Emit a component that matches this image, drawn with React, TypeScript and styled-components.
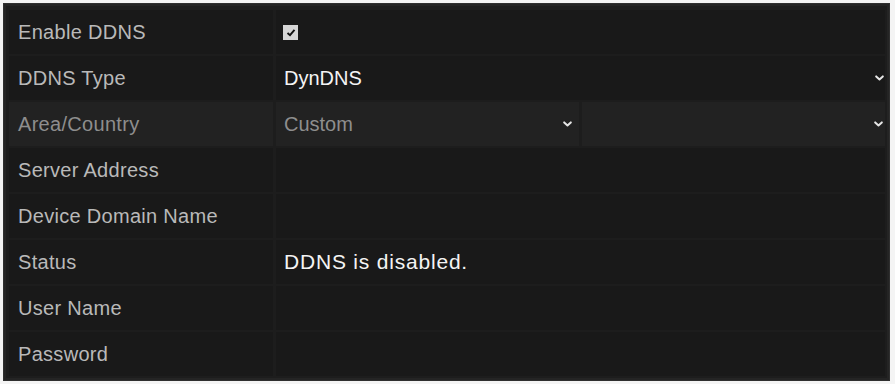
import React from "react";
import styled, { createGlobalStyle } from "styled-components";

const Global = createGlobalStyle`
  html, body { margin: 0; padding: 0; background: #f4f4f4; }
  body { font-family: "Liberation Sans", Arial, sans-serif; }
`;

const Frame = styled.div`
  width: 895px;
  height: 384px;
  box-sizing: border-box;
  padding: 3px 5px 3px 3px;
  background: #f4f4f4;
`;

const Panel = styled.div`
  height: 100%;
  box-sizing: border-box;
  background: #1d1d1d;
  border: 1px solid #2f2f2f;
  box-shadow: inset 0 0 0 2px #242424;
  padding: 6px 4px 4px 5px;
  display: flex;
  flex-direction: column;
  gap: 2px;
`;

const Row = styled.div`
  display: grid;
  grid-template-columns: 264px 1fr;
  gap: 3px;
  height: 44px;
  flex: 0 0 44px;
`;

const Cell = styled.div<{ $dim?: boolean; $value?: boolean; $big?: boolean }>`
  background: ${(p) => (p.$dim ? "#222222" : "#191919")};
  display: flex;
  align-items: center;
  padding-left: ${(p) => (p.$value ? "8px" : "9px")};
  font-size: ${(p) => (p.$big ? "21px" : "20px")};
  letter-spacing: ${(p) => (p.$big ? "0.8px" : p.$value ? "0" : "0.3px")};
  color: ${(p) => (p.$dim ? "#8e8e8e" : p.$value ? "#f4f4f4" : "#b9b9b9")};
  box-sizing: border-box;
  min-width: 0;
`;

const Split = styled.div`
  display: grid;
  grid-template-columns: 303px 1fr;
  gap: 3px;
`;

const Select = styled(Cell)<{ $edge?: number }>`
  justify-content: space-between;
  padding-right: ${(p) => p.$edge ?? 3}px;
`;

const Chevron = () => (
  <svg width="9" height="6" viewBox="0 0 9 6">
    <path d="M1.2 1.4 L4.5 4.4 L7.8 1.4" stroke="#e6e6e6" strokeWidth="2" fill="none" strokeLinecap="round" strokeLinejoin="round" />
  </svg>
);

const Check = styled.span`
  width: 15px;
  height: 15px;
  background: #d6d6d6;
  display: inline-flex;
  align-items: center;
  justify-content: center;
  margin-left: -1px;
`;

const labels = ["Server Address", "Device Domain Name"];

export default function App() {
  return (
    <>
      <Global />
      <Frame>
        <Panel>
          <Row>
            <Cell>Enable DDNS</Cell>
            <Cell $value>
              <Check>
                <svg width="10" height="9" viewBox="0 0 10 9">
                  <path d="M1.5 5 L4 7.2 L8.5 1.8" stroke="#111" strokeWidth="1.9" fill="none" />
                </svg>
              </Check>
            </Cell>
          </Row>
          <Row>
            <Cell>DDNS Type</Cell>
            <Select $value $edge={1}>
              <span>DynDNS</span>
              <Chevron />
            </Select>
          </Row>
          <Row>
            <Cell $dim>Area/Country</Cell>
            <Split>
              <Select $dim $value $edge={7}>
                <span>Custom</span>
                <Chevron />
              </Select>
              <Select $dim $value $edge={2}>
                <span />
                <Chevron />
              </Select>
            </Split>
          </Row>
          {labels.map((l) => (
            <Row key={l}>
              <Cell>{l}</Cell>
              <Cell $value />
            </Row>
          ))}
          <Row>
            <Cell>Status</Cell>
            <Cell $value $big>DDNS is disabled.</Cell>
          </Row>
          <Row>
            <Cell>User Name</Cell>
            <Cell $value />
          </Row>
          <Row>
            <Cell>Password</Cell>
            <Cell $value />
          </Row>
        </Panel>
      </Frame>
    </>
  );
}
